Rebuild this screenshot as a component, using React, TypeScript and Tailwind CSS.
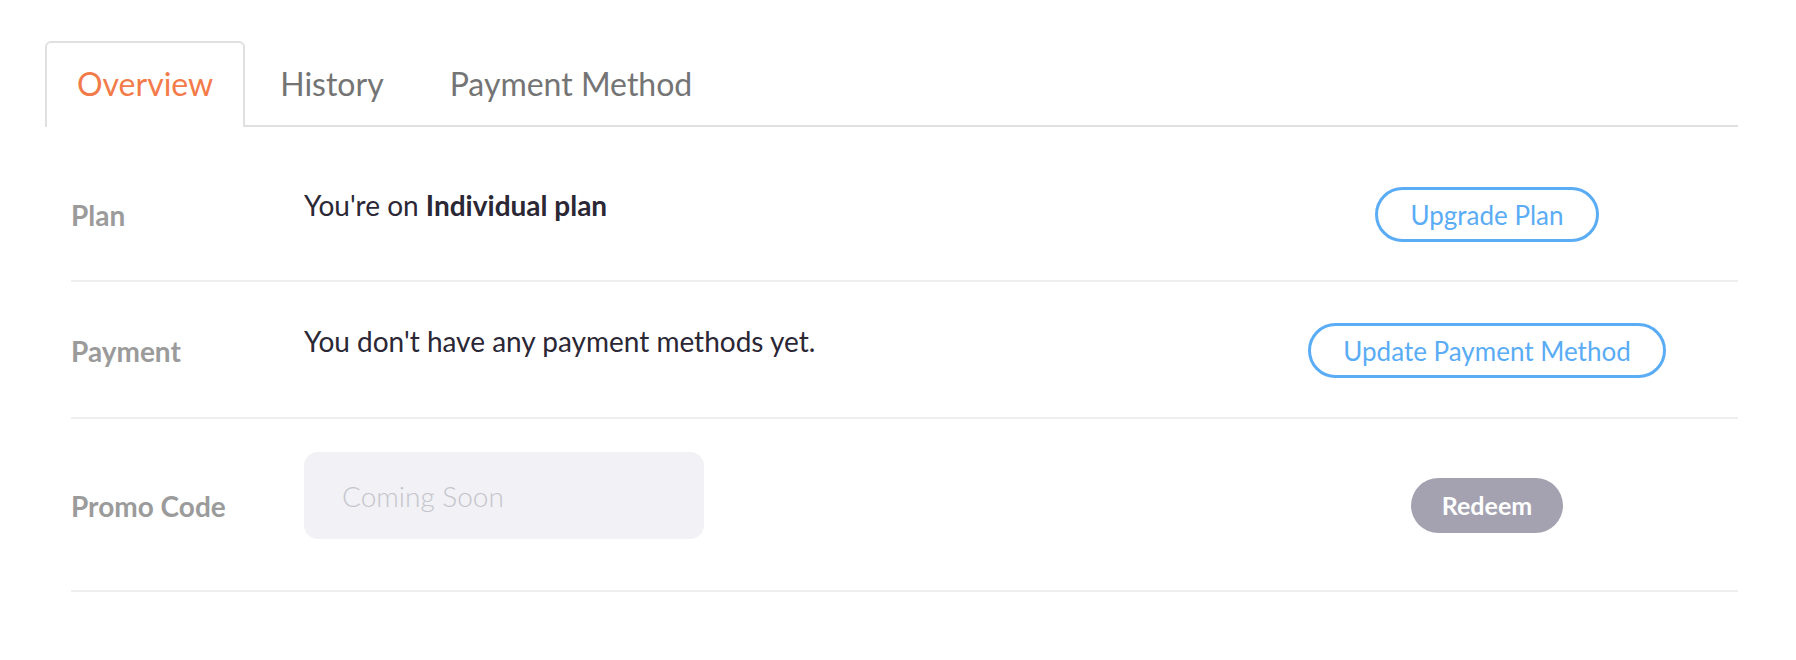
import { useState } from "react";

type Row = {
  label: string;
};

const tabs = ["Overview", "History", "Payment Method"];

function PillButton({ children }: { children: React.ReactNode }) {
  return (
    <button
      type="button"
      className="h-[55px] rounded-full border-[3px] border-[#5aacf5] px-[32px] text-[26px] leading-none text-[#5aacf5] bg-white cursor-pointer"
    >
      {children}
    </button>
  );
}

function RowLabel({ label }: Row) {
  return <div className="text-[28px] leading-[34px] font-bold text-[#9b9b9b]">{label}</div>;
}

export default function App() {
  const [active, setActive] = useState("Overview");

  return (
    <div className="min-h-[660px] w-full bg-white pt-[41px] pl-[45px] pr-[58px] font-['Lato','Liberation_Sans',sans-serif]">
      {/* Tabs */}
      <div className="flex h-[86px]">
        {tabs.map((t) =>
          t === active ? (
            <button
              key={t}
              type="button"
              onClick={() => setActive(t)}
              className="flex items-center rounded-t-[6px] border-x-2 border-t-2 border-[#e0e0e0] bg-white px-[30px] pb-[2px] text-[32px] text-[#f37b4a]"
            >
              {t}
            </button>
          ) : (
            <button
              key={t}
              type="button"
              onClick={() => setActive(t)}
              className="flex items-center border-b-2 border-[#e0e0e0] pt-[2px] pl-[35px] pr-[31px] text-[32px] text-[#747474] cursor-pointer"
            >
              {t}
            </button>
          )
        )}
        <div className="flex-1 border-b-2 border-[#e0e0e0]" />
      </div>

      {/* Rows */}
      <div className="ml-[26px]">
        <div className="grid grid-cols-[233px_1fr_502px] items-center border-b-2 border-[#eeeeee] pt-[60px] pb-[38px]">
          <RowLabel label="Plan" />
          <div className="mb-[19px] text-[28px] leading-[34px] text-[#2b2735]">
            You're on <span className="font-bold">Individual plan</span>
          </div>
          <div className="flex justify-center">
            <PillButton>Upgrade Plan</PillButton>
          </div>
        </div>

        <div className="grid grid-cols-[233px_1fr_502px] items-center border-b-2 border-[#eeeeee] pt-[41px] pb-[39px]">
          <RowLabel label="Payment" />
          <div className="mb-[19px] text-[28px] leading-[34px] text-[#2b2735]">
            You don't have any payment methods yet.
          </div>
          <div className="flex justify-center">
            <PillButton>Update Payment Method</PillButton>
          </div>
        </div>

        <div className="grid grid-cols-[233px_1fr_502px] items-center border-b-2 border-[#eeeeee] pt-[33px] pb-[31px]">
          <RowLabel label="Promo Code" />
          <div className="mb-[20px]">
            <input
              disabled
              placeholder="Coming Soon"
              className="h-[87px] w-[400px] rounded-[14px] bg-[#f1f1f6] pl-[38px] text-[28px] font-light outline-none placeholder:text-[#c5c5cb]"
            />
          </div>
          <div className="flex justify-center">
            <button
              type="button"
              className="h-[55px] w-[152px] rounded-full bg-[#a4a2b1] text-[25px] font-bold text-white"
            >
              Redeem
            </button>
          </div>
        </div>
      </div>
    </div>
  );
}
